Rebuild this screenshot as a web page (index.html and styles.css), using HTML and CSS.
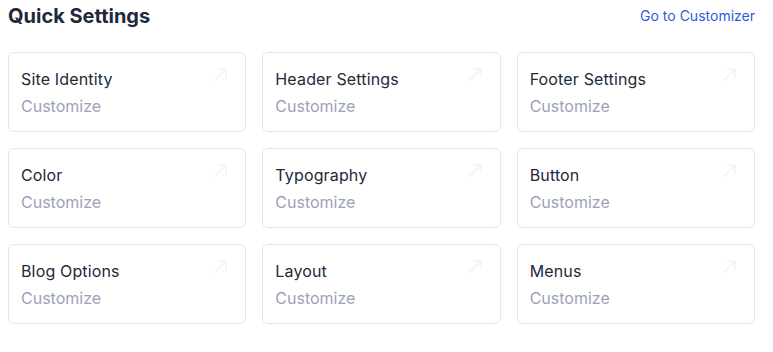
FILE: index.html
```html
<!DOCTYPE html>
<html lang="en">
<head>
    <meta charset="UTF-8">
    <meta name="viewport" content="width=device-width, initial-scale=1.0">
    <title>Quick Settings</title>
    <link rel="stylesheet" href="styles.css">
</head>
<body>
    <div class="quick-settings">
        <div class="quick-settings-header">
            <h2 class="quick-settings-title">Quick Settings</h2>
            <a class="customizer-link" href="#">Go to Customizer</a>
        </div>
        <div class="settings-grid">
            <a class="setting-card" href="#">
                <div class="setting-name">Site Identity</div>
                <div class="setting-action">Customize</div>
                <svg class="setting-arrow" viewBox="0 0 20 20"><path d="M4 16 L16 4 M7 4 H16 V13"/></svg>
            </a>
            <a class="setting-card" href="#">
                <div class="setting-name">Header Settings</div>
                <div class="setting-action">Customize</div>
                <svg class="setting-arrow" viewBox="0 0 20 20"><path d="M4 16 L16 4 M7 4 H16 V13"/></svg>
            </a>
            <a class="setting-card" href="#">
                <div class="setting-name">Footer Settings</div>
                <div class="setting-action">Customize</div>
                <svg class="setting-arrow" viewBox="0 0 20 20"><path d="M4 16 L16 4 M7 4 H16 V13"/></svg>
            </a>
            <a class="setting-card" href="#">
                <div class="setting-name">Color</div>
                <div class="setting-action">Customize</div>
                <svg class="setting-arrow" viewBox="0 0 20 20"><path d="M4 16 L16 4 M7 4 H16 V13"/></svg>
            </a>
            <a class="setting-card" href="#">
                <div class="setting-name">Typography</div>
                <div class="setting-action">Customize</div>
                <svg class="setting-arrow" viewBox="0 0 20 20"><path d="M4 16 L16 4 M7 4 H16 V13"/></svg>
            </a>
            <a class="setting-card" href="#">
                <div class="setting-name">Button</div>
                <div class="setting-action">Customize</div>
                <svg class="setting-arrow" viewBox="0 0 20 20"><path d="M4 16 L16 4 M7 4 H16 V13"/></svg>
            </a>
            <a class="setting-card" href="#">
                <div class="setting-name">Blog Options</div>
                <div class="setting-action">Customize</div>
                <svg class="setting-arrow" viewBox="0 0 20 20"><path d="M4 16 L16 4 M7 4 H16 V13"/></svg>
            </a>
            <a class="setting-card" href="#">
                <div class="setting-name">Layout</div>
                <div class="setting-action">Customize</div>
                <svg class="setting-arrow" viewBox="0 0 20 20"><path d="M4 16 L16 4 M7 4 H16 V13"/></svg>
            </a>
            <a class="setting-card" href="#">
                <div class="setting-name">Menus</div>
                <div class="setting-action">Customize</div>
                <svg class="setting-arrow" viewBox="0 0 20 20"><path d="M4 16 L16 4 M7 4 H16 V13"/></svg>
            </a>
        </div>
    </div>
</body>
</html>
```

FILE: styles.css
```css
body {
    font-family: Inter, "Noto Sans", sans-serif;
    margin: 0;
    padding: 0;
    background-color: #ffffff;
    color: #1e293b;
}
.quick-settings {
    padding: 2px 18px 0 8px;
}
.quick-settings-header {
    display: flex;
    align-items: center;
    justify-content: space-between;
    height: 28px;
    margin-bottom: 22px;
}
.quick-settings-title {
    margin: 0;
    font-size: 20px;
    line-height: 28px;
    font-weight: 700;
    color: #1e293b;
}
.customizer-link {
    font-size: 14px;
    line-height: 20px;
    color: #2f5bdc;
    text-decoration: none;
}
.settings-grid {
    display: grid;
    grid-template-columns: repeat(3, 1fr);
    gap: 16px;
}
.setting-card {
    position: relative;
    display: block;
    height: 80px;
    box-sizing: border-box;
    padding: 14px 12px 13px 12px;
    border: 1px solid #e3e6ea;
    border-radius: 6px;
    text-decoration: none;
}
.setting-name {
    font-size: 16px;
    line-height: 24px;
    letter-spacing: 0.15px;
    color: #1e293b;
    margin-bottom: 3px;
}
.setting-action {
    font-size: 16px;
    line-height: 24px;
    color: #9ca3b8;
}
.setting-arrow {
    position: absolute;
    top: 12px;
    right: 15px;
    width: 20px;
    height: 20px;
    fill: none;
    stroke: #f2f3f5;
    stroke-width: 1.5;
}
```
